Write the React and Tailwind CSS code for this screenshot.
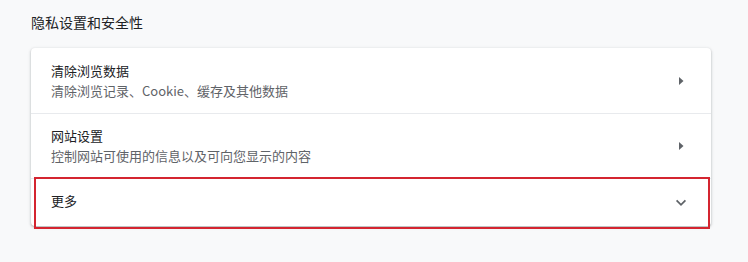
import React from 'react'

const FONT = { fontFamily: '"Noto Sans CJK SC", "Noto Sans", Roboto, sans-serif' }

const ROWS = [
  { title: '清除浏览数据', sub: '清除浏览记录、Cookie、缓存及其他数据' },
  { title: '网站设置', sub: '控制网站可使用的信息以及可向您显示的内容' },
]

function ArrowRight() {
  return (
    <svg width="20" height="20" viewBox="0 0 20 20" className="text-[#5f6368]">
      <path d="M8 6 L12.5 10 L8 14 Z" fill="currentColor" />
    </svg>
  )
}

function ChevronDown() {
  return (
    <svg width="20" height="20" viewBox="0 0 20 20" className="text-[#5f6368]">
      <path d="M5.6 7.4 L10 11.8 L14.4 7.4" fill="none" stroke="currentColor" strokeWidth="1.8" />
    </svg>
  )
}

export default function App() {
  return (
    <div className="w-[748px] h-[262px] bg-[#f8f9fa] pl-[31px] pr-[37px] pt-[12px]" style={FONT}>
      <h2 className="text-[14px] leading-[20px] text-[#202124] font-normal">隐私设置和安全性</h2>

      <div className="mt-[16px] bg-white rounded-[4px] shadow-[0_1px_2px_rgba(60,64,67,0.3),0_1px_3px_1px_rgba(60,64,67,0.1)]">
        {ROWS.map((r, i) => (
          <div key={r.title}
            className={`h-[65px] flex items-center pl-[20px] pr-[20px] ${i > 0 ? 'border-t border-[#e8eaed]' : ''}`}>
            <div className="flex-1 min-w-0">
              <p className="text-[13px] leading-[20px] text-[#202124]">{r.title}</p>
              <p className="text-[13px] leading-[20px] text-[#5f6368]">{r.sub}</p>
            </div>
            <ArrowRight />
          </div>
        ))}

        <div className="relative h-[48px] flex items-center pl-[20px] pr-[20px] border-t border-[#e8eaed]">
          <p className="flex-1 text-[13px] leading-[20px] text-[#202124] mb-[3px]">更多</p>
          <ChevronDown />
          {/* red highlight frame drawn over the row */}
          <div className="absolute left-[3px] right-[1px] top-[-2px] bottom-[-3px] border-2 border-[#d42530] pointer-events-none" />
        </div>
      </div>
    </div>
  )
}
